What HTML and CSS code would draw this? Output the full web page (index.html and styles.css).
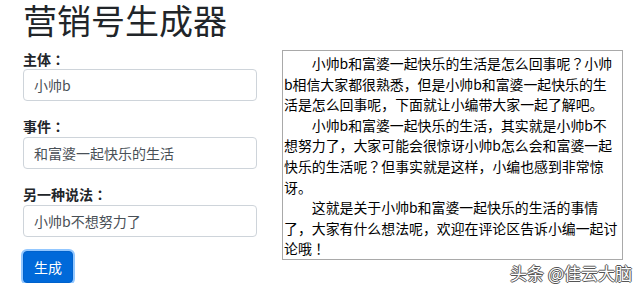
FILE: index.html
```html
<!DOCTYPE html>
<html lang="zh-CN">
<head>
    <meta charset="UTF-8">
    <meta name="viewport" content="width=device-width, initial-scale=1.0">
    <title>营销号生成器</title>
    <link rel="stylesheet" href="styles.css">
</head>
<body>
    <div class="page">
        <h1 class="page-title">营销号生成器</h1>
        <div class="main">
            <form class="gen-form" onsubmit="return false;">
                <label class="field-label" for="subject">主体<span class="punct" lang="ja">：</span></label>
                <input class="field-input" id="subject" type="text" value="小帅b">

                <label class="field-label" for="event">事件<span class="punct" lang="ja">：</span></label>
                <input class="field-input" id="event" type="text" value="和富婆一起快乐的生活">

                <label class="field-label" for="alias">另一种说法<span class="punct" lang="ja">：</span></label>
                <input class="field-input" id="alias" type="text" value="小帅b不想努力了">

                <button class="gen-btn" type="submit">生成</button>
            </form>
            <div class="result">
                <div class="line">　　小帅b和富婆一起快乐的生活是怎么回事呢<span class="punct" lang="ja">？</span>小帅</div>
                <div class="line">b相信大家都很熟悉，但是小帅b和富婆一起快乐的生</div>
                <div class="line">活是怎么回事呢，下面就让小编带大家一起了解吧。</div>
                <div class="line">　　小帅b和富婆一起快乐的生活，其实就是小帅b不</div>
                <div class="line">想努力了，大家可能会很惊讶小帅b怎么会和富婆一起</div>
                <div class="line">快乐的生活呢<span class="punct" lang="ja">？</span>但事实就是这样，小编也感到非常惊</div>
                <div class="line">讶。</div>
                <div class="line">　　这就是关于小帅b和富婆一起快乐的生活的事情</div>
                <div class="line">了，大家有什么想法呢，欢迎在评论区告诉小编一起讨</div>
                <div class="line">论哦<span class="punct" lang="ja">！</span></div>
            </div>
        </div>
    </div>
    <div class="watermark">头条 @佳云大脑</div>
</body>
</html>
```

FILE: styles.css
```css
body {
    margin: 0;
    padding: 0;
    background-color: #fff;
    font-family: "Noto Sans CJK SC", "Noto Sans", sans-serif;
    color: #212529;
    overflow: hidden;
}
.page {
    padding: 0 0 0 23px;
}
.page-title {
    font-size: 34px;
    font-weight: 400;
    line-height: 40px;
    margin: 0 0 9px 0;
}
.main {
    display: flex;
    align-items: flex-start;
    gap: 25px;
}
.gen-form {
    display: flex;
    flex-direction: column;
    width: 234px;
}
.field-label {
    font-size: 14px;
    font-weight: 700;
    line-height: 20px;
    margin-bottom: 0;
}
.punct {
    font-family: "Noto Sans CJK JP", "Noto Sans CJK SC", sans-serif;
}
.field-input {
    box-sizing: border-box;
    height: 32px;
    padding: 5px 10px;
    font-family: inherit;
    font-size: 14px;
    line-height: 20px;
    color: #495057;
    border: 1px solid #ced4da;
    border-radius: 4px;
    margin: 0 0 15px 0;
    outline: none;
}
#event, #alias {
    margin-top: 1px;
}
.gen-btn {
    align-self: flex-start;
    box-sizing: border-box;
    height: 32px;
    width: 50px;
    margin-top: -1px;
    padding: 0;
    font-family: inherit;
    font-size: 14px;
    color: #fff;
    background-color: #0069d9;
    border: 1px solid #0062cc;
    border-radius: 4px;
    box-shadow: 0 0 0 2px rgba(38, 143, 255, 0.5);
    cursor: pointer;
}
.result {
    width: 337px;
    height: 206px;
    margin-top: 1px;
    padding: 2px 1px 0 1px;
    border: 1px solid #a9a9a9;
    font-size: 13.9px;
    line-height: 20.6px;
    color: #000;
    overflow: hidden;
}
.line {
    white-space: nowrap;
}
.watermark {
    position: absolute;
    right: 8px;
    bottom: 2px;
    font-size: 17px;
    line-height: 20px;
    color: #fff;
    text-shadow: 1px 0 0 #555, -1px 0 0 #555, 0 1px 0 #555, 0 -1px 0 #555;
}
```
